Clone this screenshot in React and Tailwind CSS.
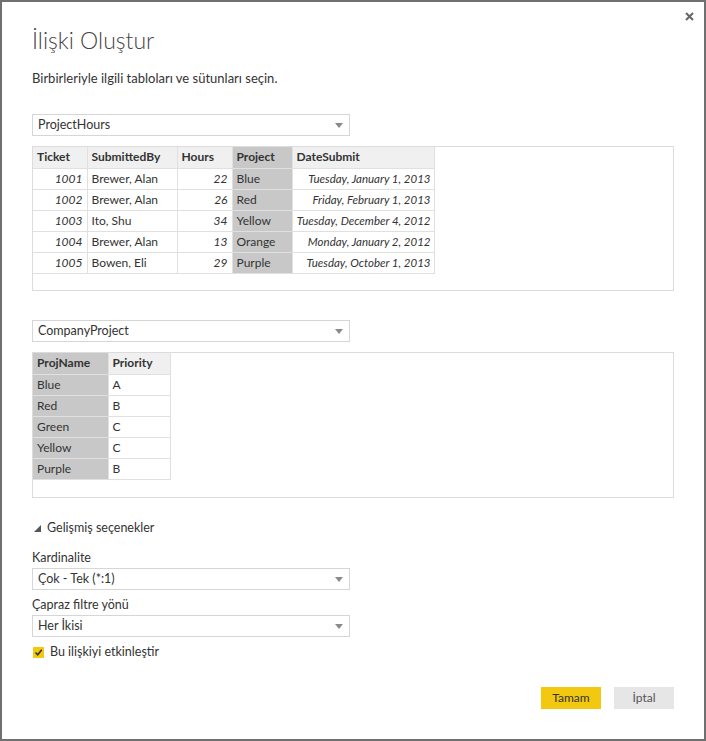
import React from "react";

const hours = [
  ["1001", "Brewer, Alan", "22", "Blue", "Tuesday, January 1, 2013"],
  ["1002", "Brewer, Alan", "26", "Red", "Friday, February 1, 2013"],
  ["1003", "Ito, Shu", "34", "Yellow", "Tuesday, December 4, 2012"],
  ["1004", "Brewer, Alan", "13", "Orange", "Monday, January 2, 2012"],
  ["1005", "Bowen, Eli", "29", "Purple", "Tuesday, October 1, 2013"],
];

const projects = [
  ["Blue", "A"],
  ["Red", "B"],
  ["Green", "C"],
  ["Yellow", "C"],
  ["Purple", "B"],
];

function Caret() {
  return (
    <svg width="8" height="5" viewBox="0 0 8 5" className="shrink-0">
      <polygon points="0,0 8,0 4,5" fill="#8a8a8a" />
    </svg>
  );
}

function Dropdown({ value }) {
  return (
    <div className="w-[318px] h-[22px] border border-[#d6d6d6] flex items-center justify-between pl-[5px] pr-[6px] pt-[1px] text-[12.5px] text-[#333]">
      <span>{value}</span>
      <Caret />
    </div>
  );
}

const th = "h-[21px] px-[4px] text-left font-bold text-[12px] text-[#333] whitespace-nowrap border-r border-b border-[#e0e0e0]";
const td = "h-[21px] px-[4px] text-[12px] text-[#333] whitespace-nowrap border-r border-b border-[#e0e0e0]";

export default function App() {
  return (
    <div className="relative w-[706px] h-[741px] bg-white border-2 border-[#707070] font-['Lato',sans-serif] text-[#333]">
      <svg width="9" height="9" viewBox="0 0 9 9" className="absolute top-[10px] right-[10px]">
        <path d="M1 1 L8 8 M8 1 L1 8" stroke="#666" strokeWidth="2" />
      </svg>

      <div className="px-[30px] pt-[23px] flex flex-col">
        <h1 className="text-[23px] leading-[30px] font-light text-[#444]">İlişki Oluştur</h1>
        <p className="mt-[14px] text-[13px] leading-[18px]">Birbirleriyle ilgili tabloları ve sütunları seçin.</p>

        <div className="mt-[27px]">
          <Dropdown value="ProjectHours" />
        </div>
        <div className="mt-[10px] h-[145px] border border-[#dcdcdc]">
          <table className="border-collapse">
            <thead>
              <tr className="bg-[#f0f0f0]">
                <th className={`${th} w-[54px]`}>Ticket</th>
                <th className={`${th} w-[90px]`}>SubmittedBy</th>
                <th className={`${th} w-[55px]`}>Hours</th>
                <th className={`${th} w-[60px] bg-[#c8c8c8]`}>Project</th>
                <th className={`${th} w-[142px]`}>DateSubmit</th>
              </tr>
            </thead>
            <tbody>
              {hours.map((r) => (
                <tr key={r[0]}>
                  <td className={`${td} text-right italic`}>{r[0]}</td>
                  <td className={td}>{r[1]}</td>
                  <td className={`${td} text-right italic`}>{r[2]}</td>
                  <td className={`${td} bg-[#c8c8c8]`}>{r[3]}</td>
                  <td className={`${td} text-right italic !text-[11.5px] !px-[3px]`}>{r[4]}</td>
                </tr>
              ))}
            </tbody>
          </table>
        </div>

        <div className="mt-[29px]">
          <Dropdown value="CompanyProject" />
        </div>
        <div className="mt-[10px] h-[146px] border border-[#dcdcdc]">
          <table className="border-collapse">
            <thead>
              <tr>
                <th className={`${th} w-[75px] bg-[#c8c8c8]`}>ProjName</th>
                <th className={`${th} w-[62px] bg-[#f0f0f0]`}>Priority</th>
              </tr>
            </thead>
            <tbody>
              {projects.map((r) => (
                <tr key={r[0]}>
                  <td className={`${td} bg-[#c8c8c8]`}>{r[0]}</td>
                  <td className={td}>{r[1]}</td>
                </tr>
              ))}
            </tbody>
          </table>
        </div>

        <div className="mt-[21px] h-[18px] flex items-center gap-[6px] text-[12.5px]">
          <svg width="7" height="7" viewBox="0 0 7 7" className="ml-[2px]">
            <polygon points="7,0 7,7 0,7" fill="#555" />
          </svg>
          <span>Gelişmiş seçenekler</span>
        </div>

        <div className="mt-[12px] h-[18px] flex items-center text-[12.5px]">Kardinalite</div>
        <div className="mt-[1px]">
          <Dropdown value="Çok - Tek (*:1)" />
        </div>

        <div className="mt-[6px] h-[18px] flex items-center text-[12.5px]">Çapraz filtre yönü</div>
        <div className="mt-[1px]">
          <Dropdown value="Her İkisi" />
        </div>

        <div className="mt-[6px] h-[18px] flex items-center gap-[6px] text-[12.5px]">
          <div className="ml-[1px] w-[11px] h-[11px] bg-[#f2c811] flex items-center justify-center">
            <svg width="9" height="9" viewBox="0 0 9 9">
              <path d="M1.5 4.5 L3.7 6.8 L7.8 1.8" stroke="#333" strokeWidth="1.6" fill="none" />
            </svg>
          </div>
          <span>Bu ilişkiyi etkinleştir</span>
        </div>

        <div className="mt-[26px] flex justify-end gap-[13px]">
          <button className="w-[60px] h-[22px] bg-[#f2c811] text-[12px] text-[#333]">Tamam</button>
          <button className="w-[60px] h-[22px] bg-[#e6e6e6] text-[12px] text-[#555]">İptal</button>
        </div>
      </div>
    </div>
  );
}
